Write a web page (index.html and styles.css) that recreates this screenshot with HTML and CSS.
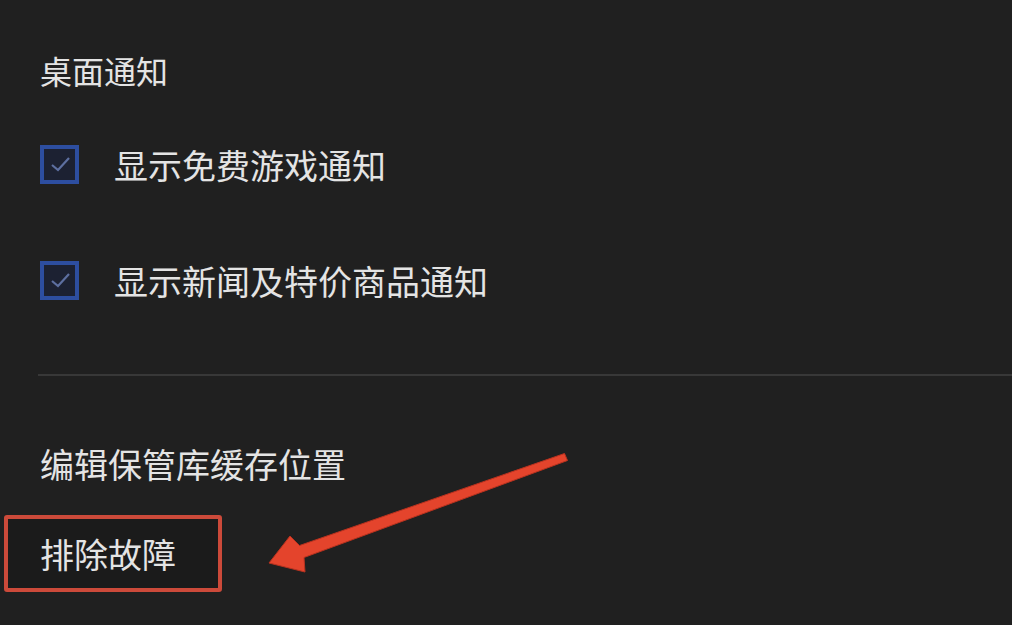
FILE: index.html
```html
<!DOCTYPE html>
<html lang="zh-CN">
<head>
<meta charset="utf-8">
<title>设置</title>
<link rel="stylesheet" href="styles.css">
</head>
<body>
<div class="page">
  <div class="section-title">桌面通知</div>
  <div class="checks">
    <label class="check-row">
      <span class="checkbox"><svg viewBox="0 0 30 30" width="30" height="30"><path d="M7 16 L13 21 L24 9" fill="none" stroke="#5d6fa0" stroke-width="2.2"/></svg></span>
      <span class="check-label">显示免费游戏通知</span>
    </label>
    <label class="check-row">
      <span class="checkbox"><svg viewBox="0 0 30 30" width="30" height="30"><path d="M7 16 L13 21 L24 9" fill="none" stroke="#5d6fa0" stroke-width="2.2"/></svg></span>
      <span class="check-label">显示新闻及特价商品通知</span>
    </label>
  </div>
  <div class="divider"></div>
  <div class="link">编辑保管库缓存位置</div>
  <div class="link highlight">排除故障</div>
  <svg class="arrow" viewBox="0 0 1012 625" width="1012" height="625">
    <polygon points="269,563 290,536 299.5,545.5 564.5,453.5 567.5,460.5 304,557.5 305,572" fill="#e4442c" stroke="#b8321f" stroke-width="1" stroke-linejoin="round"/>
  </svg>
</div>
</body>
</html>
```
FILE: styles.css
```css
html, body {
  margin: 0;
  padding: 0;
  background: #202020;
}
body {
  font-family: "Noto Sans CJK SC", "Noto Sans", sans-serif;
  color: #e4e4e4;
  width: 1012px;
  height: 625px;
  overflow: hidden;
}
.page {
  position: relative;
  padding: 50px 0 0 40px;
  height: 625px;
  box-sizing: border-box;
}
.section-title {
  font-size: 32px;
  line-height: 40px;
  height: 40px;
}
.checks {
  margin-top: 46px;
  display: flex;
  flex-direction: column;
  gap: 60px;
}
.check-row {
  display: flex;
  align-items: center;
  gap: 35px;
  height: 56px;
}
.checkbox {
  width: 39px;
  height: 39px;
  box-sizing: border-box;
  border: 4px solid #2d4ea0;
  background: #1c2132;
  display: flex;
  align-items: center;
  justify-content: center;
  flex: none;
}
.check-label {
  font-size: 34px;
  line-height: 50px;
  padding-top: 1px;
}
.divider {
  margin-top: 66px;
  margin-left: -2px;
  height: 2px;
  background: #383838;
}
.link {
  font-size: 34px;
  line-height: 50px;
  height: 50px;
}
.divider + .link {
  margin-top: 63px;
}
.highlight {
  margin-top: 26px;
  margin-left: -36px;
  width: 218px;
  height: 77px;
  box-sizing: border-box;
  border: 4px solid #cc4a3a;
  border-radius: 3px;
  background: #1b1b1b;
  padding-left: 32px;
  display: flex;
  align-items: center;
  line-height: 50px;
  padding-top: 1px;
}
.arrow {
  position: absolute;
  left: 0;
  top: 0;
  pointer-events: none;
}
```
